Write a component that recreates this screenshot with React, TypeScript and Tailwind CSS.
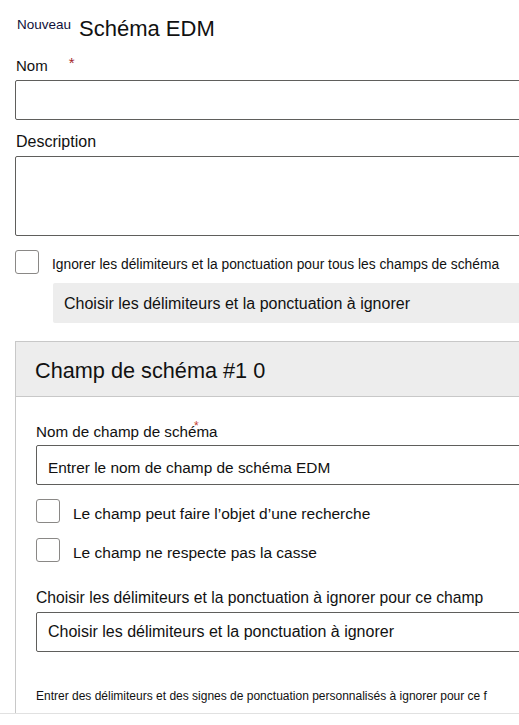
export default function App() {
  return (
    <div className="w-[519px] h-[725px] overflow-hidden bg-white font-['Liberation_Sans',Arial,sans-serif] text-[#111]">
      <div className="h-[713px] overflow-hidden pl-[15px]">
        <div className="w-[580px]">
          <div className="flex items-start pt-[18px]">
            <span className="ml-[2px] text-[13.5px] leading-[13.5px] text-[#10103a]">Nouveau</span>
            <span className="ml-[8px] text-[22px] leading-[22px]">Schéma EDM</span>
          </div>
          <div className="mt-[16px] h-[20px] pl-[1px] text-[15px] leading-[20px]">
            Nom
            <span className="ml-[21px] inline-block -translate-y-[3px] text-[#a4262c]">*</span>
          </div>
          <div className="mt-[4px] h-[40px] rounded-[2px] border border-[#5f5e5c] bg-white" />
          <div className="mt-[12px] h-[20px] pl-[1px] text-[16px] leading-[20px]">Description</div>
          <div className="mt-[4px] h-[80px] rounded-[2px] border border-[#5f5e5c] bg-white" />
          <div className="mt-[14px] flex items-start">
            <div className="h-[24px] w-[24px] shrink-0 rounded-[3px] border border-[#8a8886] bg-white" />
            <span className="ml-[13px] mt-[4.5px] text-[13.8px] leading-[20px]">
              Ignorer les délimiteurs et la ponctuation pour tous les champs de schéma
            </span>
          </div>
          <div className="mt-[8px] ml-[38px] flex h-[40px] items-center rounded-[2px] bg-[#ededed] pl-[11px] pt-[2px] text-[16px]">
            Choisir les délimiteurs et la ponctuation à ignorer
          </div>
          <div className="mt-[18px] border border-[#c8c8c8]">
            <div className="flex h-[55px] items-center border-b border-[#c8c8c8] bg-[#ededed] pl-[19px] pt-[6px] text-[21.7px]">
              Champ de schéma #1 0
            </div>
            <div className="pl-[20px] pt-[25px] pb-[40px]">
              <div className="relative h-[20px] text-[15.2px] leading-[20px]">
                Nom de champ de schéma
                <span className="absolute left-[158px] top-[-2px] text-[12px] leading-[12px] text-[#c4422f]">*</span>
              </div>
              <div className="mt-[3px] flex h-[40px] items-center rounded-[2px] border border-[#5f5e5c] pl-[11px] pt-[6px] text-[15.4px]">
                Entrer le nom de champ de schéma EDM
              </div>
              <div className="mt-[14px] flex items-start">
                <div className="h-[24px] w-[24px] shrink-0 rounded-[3px] border border-[#8a8886] bg-white" />
                <span className="ml-[13px] mt-[5px] text-[15.5px] leading-[20px]">
                  Le champ peut faire l’objet d’une recherche
                </span>
              </div>
              <div className="mt-[14px] flex items-start">
                <div className="h-[24px] w-[24px] shrink-0 rounded-[3px] border border-[#8a8886] bg-white" />
                <span className="ml-[13px] mt-[5px] text-[15.5px] leading-[20px]">
                  Le champ ne respecte pas la casse
                </span>
              </div>
              <div className="mt-[25px] h-[20px] text-[15.7px] leading-[20px]">
                Choisir les délimiteurs et la ponctuation à ignorer pour ce champ
              </div>
              <div className="mt-[4px] flex h-[40px] items-center rounded-[2px] border border-[#5f5e5c] pl-[11px] text-[16px]">
                Choisir les délimiteurs et la ponctuation à ignorer
              </div>
              <div className="mt-[36px] h-[16px] text-[12px] leading-[16px]">
                Entrer des délimiteurs et des signes de ponctuation personnalisés à ignorer pour ce f
              </div>
              <div className="mt-[10px] h-[40px] rounded-[2px] border border-[#5f5e5c]" />
            </div>
          </div>
        </div>
      </div>
      <div className="h-[12px] border-t border-[#e1e1e1] bg-white" />
    </div>
  );
}
